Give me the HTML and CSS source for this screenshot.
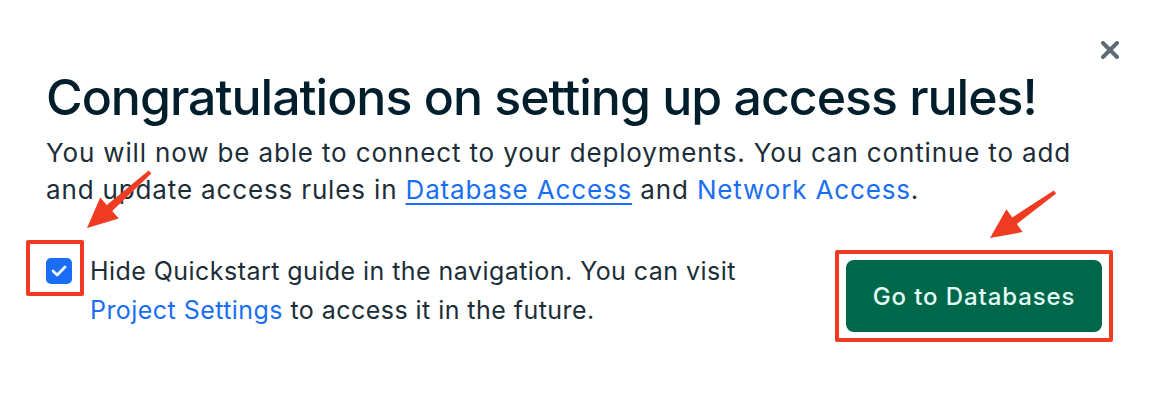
FILE: index.html
```html
<!DOCTYPE html>
<html lang="en">
<head>
  <meta charset="UTF-8">
  <title>Access rules</title>
  <link rel="stylesheet" href="styles.css">
</head>
<body>

  <div class="modal">
    <button class="close" aria-label="Close">
      <svg width="18" height="18" viewBox="0 0 18 18">
        <path d="M2 2 L16 16 M16 2 L2 16" stroke="#5d6c74" stroke-width="4" stroke-linecap="round"/>
      </svg>
    </button>

    <h1>Congratulations on setting up access rules!</h1>
    <p class="intro">
      You will now be able to connect to your deployments. You can continue to add<br>
      and update access rules in <a href="#" class="underline">Database Access</a> and <a href="#">Network Access</a>.
    </p>

    <div class="footer">
      <label class="check-row">
        <span class="check-wrap">
          <span class="checkbox">
            <svg width="16" height="12" viewBox="0 0 16 12">
              <path d="M2 6 L6.2 10 L14 2" fill="none" stroke="#fff" stroke-width="2.6" stroke-linecap="round" stroke-linejoin="round"/>
            </svg>
          </span>
          <span class="highlight check-mark"></span>
        </span>
        <span class="check-text">
          Hide Quickstart guide in the navigation. You can visit<br>
          <a href="#">Project Settings</a> to access it in the future.
        </span>
      </label>

      <div class="btn-wrap">
        <button class="primary">Go to Databases</button>
        <span class="highlight btn-mark"></span>
      </div>
    </div>

    <!-- annotation arrows -->
    <svg class="arrows" width="1160" height="395" viewBox="0 0 1160 395">
      <polygon fill="#ee3b22" points="148.7,170.5 106.8,205 100.2,197.5 87,228 118.8,218.5 112.2,211 151.3,173.5"/>
      <polygon fill="#ee3b22" points="1053.8,190.4 1012.2,217.4 1006.4,209.3 990,238 1022.6,232.1 1016.8,224 1056.2,193.6"/>
    </svg>
  </div>

</body>
</html>
```

FILE: styles.css
```css
body {
  margin: 0;
  background: #fff;
  font-family: 'Inter', 'Liberation Sans', sans-serif;
  color: #1c2d38;
}

.modal {
  position: relative;
  height: 395px;
  padding: 66px 46px 0 46px;
  box-sizing: border-box;
}

.close {
  position: absolute;
  top: 41px;
  right: 41px;
  border: none;
  background: none;
  padding: 0;
  line-height: 0;
}

h1 {
  margin: 0;
  font-size: 50px;
  font-weight: 500;
  line-height: 62px;
  color: #001e2b;
  letter-spacing: -1px;
  white-space: nowrap;
}

.intro {
  margin: 6px 0 0;
  font-size: 26px;
  line-height: 37px;
  letter-spacing: 0.85px;
  color: #1c2d38;
  white-space: nowrap;
}

a {
  color: #1a6ef5;
  text-decoration: none;
}

a.underline {
  text-decoration: underline;
  text-underline-offset: 4px;
  text-decoration-thickness: 1.5px;
}

.footer {
  display: flex;
  justify-content: space-between;
  align-items: flex-start;
  margin-top: 44px;
  padding-right: 12px;
}

.check-row {
  display: flex;
  align-items: flex-start;
  gap: 18px;
}

.check-wrap {
  position: relative;
  margin-top: 6px;
}

.checkbox {
  display: flex;
  align-items: center;
  justify-content: center;
  width: 26px;
  height: 26px;
  border-radius: 5px;
  background: #1a6ef5;
}

.check-text {
  font-size: 25px;
  line-height: 39px;
  letter-spacing: 0.45px;
  color: #1c2d38;
  white-space: nowrap;
}

.btn-wrap {
  position: relative;
  margin-top: 8px;
}

.primary {
  width: 256px;
  height: 72px;
  border: none;
  border-radius: 8px;
  background: #00684a;
  color: #e3fcf7;
  font-family: inherit;
  font-size: 24px;
  font-weight: 500;
  letter-spacing: 0.9px;
}

.highlight {
  position: absolute;
  border: 4px solid #ee3b22;
  border-radius: 2px;
}

.check-mark {
  left: -20px;
  top: -18px;
  width: 50px;
  height: 48px;
}

.btn-mark {
  left: -11px;
  top: -10px;
  right: -11px;
  bottom: -10px;
}

.arrows {
  position: absolute;
  top: 0;
  left: 0;
  pointer-events: none;
}
```
